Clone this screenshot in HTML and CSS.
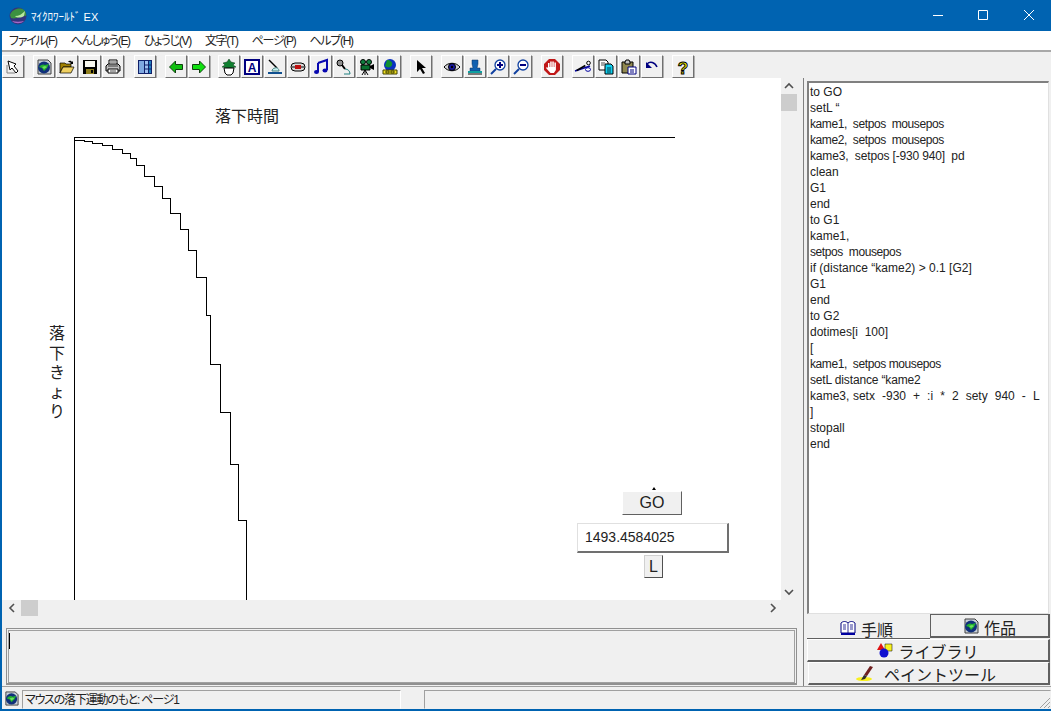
FILE: index.html
```html
<!DOCTYPE html>
<html lang="ja">
<head>
    <meta charset="UTF-8">
    <title>マイクロワールド EX</title>
    <link rel="stylesheet" href="styles.css">
</head>
<body>
    <svg class="defs" width="0" height="0">
        <symbol id="globe" viewBox="0 0 16 16">
            <path d="M2 1h10l3 3v11H2z" fill="#c8d0d8" stroke="#404040"/>
            <circle cx="8" cy="8.5" r="6" fill="#10307a"/>
            <path d="M3 8c2-3 5-3 6-2l4-1-2 4-3 3-2-3z" fill="#20b030"/>
            <path d="M6 8l3-1 2 1-3 2z" fill="#70e060"/>
        </symbol>
    </svg>

    <div class="window">
        <header class="titlebar">
            <svg class="app-logo" viewBox="0 0 18 18">
                <circle cx="9" cy="9" r="8.500" fill="#34347c"/>
                <path d="M1 8c2-6 10-8 14-5 2 2 2.500 4 2 6-4-1-10 4-15 2z" fill="#3c9040"/>
                <path d="M6 9c4 0 7-2 10-5l-1 5c-3 2-7 2-9 0z" fill="#b8e8a0"/>
                <path d="M3 14c3 3 9 3 12 0-4 1-8 1-12 0z" fill="#a868c8"/>
            </svg>
            <span class="app-title">ﾏｲｸﾛﾜｰﾙﾄﾞ EX</span>
            <div class="win-controls">
                <svg class="win-btn" viewBox="0 0 46 31"><path d="M20 15.500h10" stroke="#fff" fill="none"/></svg>
                <svg class="win-btn" viewBox="0 0 46 31"><path d="M19.500 10.500h9v9h-9z" stroke="#fff" fill="none"/></svg>
                <svg class="win-btn" viewBox="0 0 46 31"><path d="M19 10l10 10M29 10l-10 10" stroke="#fff" fill="none"/></svg>
            </div>
        </header>

        <nav class="menubar">
            <span>ファイル(F)</span>
            <span>へんしゅう(E)</span>
            <span>ひょうじ(V)</span>
            <span>文字(T)</span>
            <span>ページ(P)</span>
            <span>ヘルプ(H)</span>
        </nav>

        <div class="toolbar">
            <div class="tool-group">
                <button class="tool"><svg viewBox="0 0 16 16"><path d="M3 2l8 3-2 2 4 5-2 2-4-5-2 2z" fill="#fff" stroke="#000"/><path d="M2 6v8h8" fill="none" stroke="#808080"/></svg></button>
            </div>
            <div class="tool-group">
                <button class="tool"><svg viewBox="0 0 16 16"><use href="#globe"/></svg></button>
                <button class="tool"><svg viewBox="0 0 16 16"><path d="M1 4h5l1 1h5v3H4l-3 6z" fill="#a08000" stroke="#000" stroke-width=".7"/><path d="M4 8h11l-3 6H1z" fill="#f0d060" stroke="#000" stroke-width=".7"/><path d="M9 3c2-2 3-1 4 0l1-1v3h-3l1-1c-1-1-2-1-3-1z" fill="#000"/></svg></button>
                <button class="tool"><svg viewBox="0 0 16 16"><path d="M1 1h14v14H1z" fill="#000"/><path d="M3 2h10v6H3z" fill="#f8f8f0"/><path d="M4 10h8v5H4z" fill="#908020"/><path d="M9 11h2v3H9z" fill="#000"/></svg></button>
                <button class="tool"><svg viewBox="0 0 16 16"><path d="M4 1h8v5H4z" fill="#fff" stroke="#000"/><path d="M1 7l2-2h10l2 2v5H1z" fill="#c0c0c0" stroke="#000"/><path d="M3 10h10v4H3z" fill="#fff" stroke="#000"/><path d="M5 3h6M5 12h6M3 7h10" stroke="#000" stroke-width=".7"/></svg></button>
            </div>
            <div class="tool-group group-loose">
                <button class="tool"><svg viewBox="0 0 16 16"><path d="M1 1h14v14H1z" fill="#10206a"/><path d="M2 2h5v12H2z" fill="#80a8e0"/><path d="M8 2h3v12H8z" fill="#a0c0f0"/><path d="M12 2h2v12h-2z" fill="#2080c0"/><path d="M8 6h6M8 10h6" stroke="#10206a"/></svg></button>
            </div>
            <div class="tool-group">
                <button class="tool"><svg viewBox="0 0 16 16"><path d="M1.500 8l6-6v3.500h7v5h-7V14z" fill="#10c010" stroke="#104010"/></svg></button>
                <button class="tool"><svg viewBox="0 0 16 16"><path d="M14.500 8l-6-6v3.500h-7v5h7V14z" fill="#10e010" stroke="#104010"/></svg></button>
            </div>
            <div class="tool-group group-tight">
                <button class="tool"><svg viewBox="0 0 16 16"><path d="M8 0l2 3 4 1-2 2 3 2-5 1H6L1 8l3-2-2-2 4-1z" fill="#108030" stroke="#043010" stroke-width=".5"/><path d="M3 9h10l-1 5-2 2H6l-2-2z" fill="#fff" stroke="#000"/></svg></button>
                <button class="tool"><svg viewBox="0 0 16 16"><path d="M1 1h14v14H1z" fill="#fff" stroke="#000080" stroke-width="2"/><text x="8" y="12.500" class="glyph-a">A</text></svg></button>
                <button class="tool"><svg viewBox="0 0 16 16"><path d="M2 1l8 8" stroke="#000" stroke-width="1.500"/><path d="M8 9c2-1 4 1 4 3H5c0-1 1-3 3-3z" fill="#c8f0f0" stroke="#408080"/><path d="M1 13h14v2H1z" fill="#20a0a0"/><path d="M1 14h14" stroke="#000080"/></svg></button>
                <button class="tool"><svg viewBox="0 0 16 16"><rect x="1" y="4" width="14" height="8" rx="4" fill="#d8d8d8" stroke="#000"/><path d="M5 6h6v4H5z" fill="#c01010"/><path d="M2 8h3M11 8h3" stroke="#000"/></svg></button>
                <button class="tool"><svg viewBox="0 0 16 16"><path d="M5 4l9-3v10" fill="none" stroke="#0808b0" stroke-width="2"/><path d="M5 4v9" stroke="#0808b0" stroke-width="2"/><ellipse cx="3.500" cy="13" rx="2.500" ry="2" fill="#0808b0"/><ellipse cx="12" cy="11.500" rx="2.500" ry="2" fill="#0808b0"/></svg></button>
                <button class="tool"><svg viewBox="0 0 16 16"><circle cx="4" cy="4" r="3" fill="#909090" stroke="#000"/><path d="M6 6l3 4" stroke="#000" stroke-width="2"/><path d="M9 10c3 0 5 2 5 5H8" fill="none" stroke="#208080"/></svg></button>
                <button class="tool"><svg viewBox="0 0 16 16"><circle cx="4" cy="3" r="2.500" fill="#108040" stroke="#000"/><circle cx="10" cy="3" r="2.500" fill="#108040" stroke="#000"/><path d="M2 6h9v5H2z" fill="#087030" stroke="#000"/><path d="M11 7l4-2v6l-4-2z" fill="#000"/><path d="M6 11l-3 5M6 11v5M6 11l3 5" stroke="#000"/></svg></button>
                <button class="tool"><svg viewBox="0 0 16 16"><circle cx="8" cy="6" r="6" fill="#0830c0"/><path d="M5 1c3 0 6 2 5 5s-5 3-7 1z" fill="#109030"/><path d="M1 11h14v4H1z" fill="#f0e020" stroke="#404000"/><path d="M4 12h3v2H4zM9 12h3v2H9z" fill="none" stroke="#404000"/></svg></button>
            </div>
            <div class="tool-group">
                <button class="tool"><svg viewBox="0 0 16 16"><path d="M4 1l9 8H9l3 5-2 1-3-5-3 3z" fill="#000"/></svg></button>
            </div>
            <div class="tool-group">
                <button class="tool"><svg viewBox="0 0 16 16"><path d="M0 8c4-5 12-5 16 0-4 5-12 5-16 0z" fill="#d0d0d0" stroke="#000"/><circle cx="8" cy="8" r="3.500" fill="#1818a0" stroke="#000"/><circle cx="8" cy="8" r="1.200" fill="#000"/></svg></button>
                <button class="tool"><svg viewBox="0 0 16 16"><path d="M5 1h6v4l-1 4h3v3H3V9h3L5 5z" fill="#1060b0" stroke="#083060" stroke-width=".5"/><path d="M1 12h14v2H1z" fill="#10a0a0"/><path d="M1 15h14" stroke="#000"/></svg></button>
                <button class="tool"><svg viewBox="0 0 16 16"><path d="M6 10l-5 5" stroke="#1040a0" stroke-width="2"/><circle cx="10" cy="6" r="5" fill="#fff" stroke="#1040a0" stroke-width="1.300"/><path d="M7 6h6M10 3v6" stroke="#000080" stroke-width="2"/></svg></button>
                <button class="tool"><svg viewBox="0 0 16 16"><path d="M6 10l-5 5" stroke="#1040a0" stroke-width="2"/><circle cx="10" cy="6" r="5" fill="#fff" stroke="#1040a0" stroke-width="1.300"/><path d="M7 6h6" stroke="#000080" stroke-width="2"/></svg></button>
            </div>
            <div class="tool-group">
                <button class="tool"><svg viewBox="0 0 16 16"><path d="M5 0h6l5 5v6l-5 5H5l-5-5V5z" fill="#c01818"/><path d="M4 4h1.500v4H6.200V2.500h1.500V8h.6V2.500h1.500V8h.6V3.500h1.500V11l-2 3H6.500L2 9l1-1 1 1z" fill="#fff"/></svg></button>
            </div>
            <div class="tool-group">
                <button class="tool"><svg viewBox="0 0 16 16"><path d="M0 12l15-5" stroke="#0000a0" stroke-width="1.500"/><path d="M1 9l10 0" stroke="#000" stroke-width="1.500" transform="rotate(-30 6 9)"/><circle cx="13.500" cy="4" r="1.800" fill="#fff" stroke="#000"/><ellipse cx="13" cy="10.500" rx="2.500" ry="1.800" fill="#fff" stroke="#0000a0"/></svg></button>
                <button class="tool"><svg viewBox="0 0 16 16"><path d="M1 1h7l2 2v8H1z" fill="#fff" stroke="#000"/><path d="M7 5h6l2 2v8H7z" fill="#10d0f0" stroke="#000"/><path d="M3 4h4M3 6h3M9 9h4M9 11h4M9 13h4" stroke="#000" stroke-width=".7"/></svg></button>
                <button class="tool"><svg viewBox="0 0 16 16"><path d="M1 3h11v11H1z" fill="#908850" stroke="#000"/><path d="M4 3l1-2h3l1 2v2H4z" fill="#c0c0c0" stroke="#000"/><path d="M7 8h8v7H7z" fill="#fff" stroke="#000080"/><path d="M9 11h4M9 13h4" stroke="#000080"/></svg></button>
                <button class="tool"><svg viewBox="0 0 16 16"><path d="M3 5c3-3 8-2 10 3" fill="none" stroke="#000080" stroke-width="1.500"/><path d="M2 3v6h6z" fill="#000080"/></svg></button>
            </div>
            <div class="tool-group">
                <button class="tool"><svg viewBox="0 0 16 16"><text x="8" y="14.500" class="glyph-help">?</text></svg></button>
            </div>
        </div>

        <div class="workspace">
            <div class="stage-col">
                <div class="stage-row">
                    <div class="stage">
                        <svg class="graph" viewBox="2 78 779 522">
                            <path d="M74.500 600V137.500H675"/>
                            <path d="M74.500 140.500H84.500V141.500H92.500V143.500H102.500V145.500H112.500V149.500H122.500V153.500H130.500V158.500H136.500V165.500H144.500V176.500H154.500V186.500H162.500V198.500H170.500V213.500H180.500V229.500H188.500V250.500H196.500V277.500H206.500V315.500H210.500V364.500H220.500V412.500H230.500V464.500H238.500V520.500H246.500V600"/>
                        </svg>
                        <span class="graph-title">落下時間</span>
                        <span class="graph-ylabel">落<br>下<br>き<br>ょ<br>り</span>
                        <span class="turtle-dot"></span>
                        <button class="stage-btn go-btn">GO</button>
                        <div class="value-box">1493.4584025</div>
                        <button class="stage-btn l-btn">L</button>
                    </div>
                    <div class="vscroll">
                        <svg class="chevron" viewBox="0 0 16 16"><path d="M4 10l4-4 4 4" /></svg>
                        <div class="vthumb"></div>
                        <svg class="chevron chevron-end" viewBox="0 0 16 16"><path d="M4 6l4 4 4-4" /></svg>
                    </div>
                </div>
                <div class="hscroll">
                    <svg class="chevron" viewBox="0 0 16 16"><path d="M10 4l-4 4 4 4" /></svg>
                    <div class="hthumb"></div>
                    <svg class="chevron chevron-end" viewBox="0 0 16 16"><path d="M6 4l4 4-4 4" /></svg>
                </div>
                <div class="command-box"><span class="caret"></span></div>
            </div>

            <aside class="side-col">
                <pre class="code-box">to GO
setL “
<span class="code-tight">kame1,  setpos  mousepos</span>
<span class="code-tight">kame2,  setpos  mousepos</span>
<span class="code-snug">kame3,  setpos [-930 940]  pd</span>
clean
G1
end
to G1
kame1,
<span class="code-tight">setpos  mousepos</span>
if (distance “kame2) &gt; 0.1 [G2]
G1
end
to G2
dotimes[i  100]
[
<span class="code-tight">kame1,  setpos mousepos</span>
<span class="code-snug">setL distance “kame2</span>
<span class="code-wide">kame3, setx  -930  +  :i  *  2  sety  940  -  L</span>
]
stopall
end</pre>
                <div class="tab-row">
                    <div class="tab tab-active">
                        <svg class="tab-icon" viewBox="0 0 16 16"><path d="M1 3c2-2 5-2 7 0 2-2 5-2 7 0v10H1z" fill="#fff" stroke="#000080"/><path d="M8 3v10M3 5h3M3 7h3M10 5h3M10 7h3M3 9h3M10 9h3" stroke="#000080" stroke-width=".8"/><path d="M1 13h14v2H1z" fill="#0000a0"/></svg>
                        <span>手順</span>
                    </div>
                    <div class="tab tab-raised">
                        <svg class="tab-icon" viewBox="0 0 16 16"><use href="#globe"/></svg>
                        <span>作品</span>
                    </div>
                </div>
                <div class="tab tab-wide">
                    <svg class="tab-icon" viewBox="0 0 16 16"><path d="M4 1l4 7H0z" fill="#e01010"/><path d="M8 2h7v7H8z" fill="#f8f020" stroke="#000" stroke-width=".5"/><circle cx="7" cy="11" r="4.500" fill="#1010d0"/></svg>
                    <span>ライブラリ</span>
                </div>
                <div class="tab tab-wide tab-last">
                    <svg class="tab-icon tab-icon-brush" viewBox="0 0 24 16"><ellipse cx="9" cy="14" rx="8" ry="2" fill="#f8f020"/><path d="M15 1l3 1-6 9-3-1z" fill="#702020"/><path d="M9 10l3 1-2 3-4 1z" fill="#303030"/></svg>
                    <span>ペイントツール</span>
                </div>
            </aside>
        </div>

        <footer class="statusbar">
            <svg class="status-icon" viewBox="0 0 16 16"><use href="#globe"/></svg>
            <div class="status-text">マウスの落下運動のもと: ページ1</div>
            <div class="status-extra"></div>
            <svg class="grip" viewBox="0 0 14 14"><path d="M13 3L3 13M13 7l-6 6M13 11l-2 2" stroke="#a0a0a0" fill="none"/></svg>
        </footer>
    </div>
</body>
</html>
```

FILE: styles.css
```css
:root {
    --title-blue: #0063b1;
    --face: #f0f0f0;
    --shade: #808080;
    --jp-font: "Liberation Sans", "Noto Sans CJK JP", sans-serif;
}

* {
    margin: 0;
    padding: 0;
    box-sizing: border-box;
}

body {
    width: 1051px;
    height: 711px;
    overflow: hidden;
    background-color: var(--face);
    font-family: var(--jp-font);
    color: #000;
}

.defs {
    position: absolute;
}

.window {
    display: flex;
    flex-direction: column;
    height: 711px;
    border-left: 2px solid var(--title-blue);
    border-bottom: 2px solid var(--title-blue);
}

/* title bar */
.titlebar {
    display: flex;
    align-items: center;
    height: 31px;
    margin-left: -2px;
    padding-left: 9px;
    background-color: var(--title-blue);
    color: #fff;
}

.app-logo {
    width: 18px;
    height: 18px;
}

.app-title {
    margin-left: 4px;
    font-size: 11px;
}

.win-controls {
    display: flex;
    margin-left: auto;
}

.win-btn {
    width: 46px;
    height: 31px;
}

/* menu */
.menubar {
    display: flex;
    gap: 14px;
    align-items: center;
    height: 21px;
    padding: 0 0 2px 7px;
    background-color: #fff;
    border-bottom: 2px solid #a8a8a8;
    font-size: 12px;
    font-feature-settings: "palt";
    letter-spacing: -1.3px;
    color: #222;
}

/* toolbar */
.toolbar {
    display: flex;
    gap: 9px;
    height: 26px;
    padding: 3px 0 0 0;
    background-color: var(--face);
}

.tool-group {
    display: flex;
    gap: 1px;
}

.group-loose {
    margin-left: 1px;
}

.group-tight {
    margin-left: -1px;
}

.tool {
    display: flex;
    align-items: center;
    justify-content: center;
    width: 22px;
    height: 23px;
    background-color: var(--face);
    border: 1px solid;
    border-color: #fff #707070 #707070 #fff;
    box-shadow: 1px 1px 0 #b0b0b0;
}

.tool svg {
    width: 16px;
    height: 16px;
    overflow: visible;
}

.glyph-a {
    font: bold 12px "Liberation Sans", sans-serif;
    text-anchor: middle;
    fill: #000080;
}

.glyph-help {
    font: bold 17px "Liberation Sans", sans-serif;
    text-anchor: middle;
    fill: #f0f000;
    stroke: #000;
    stroke-width: 1px;
}

/* main area */
.workspace {
    display: flex;
    flex: 1;
    min-height: 0;
}

.stage-col {
    display: flex;
    flex-direction: column;
    width: 795px;
}

.stage-row {
    display: flex;
    height: 522px;
}

.stage {
    position: relative;
    width: 779px;
    background-color: #fff;
    overflow: hidden;
}

.graph {
    position: absolute;
    left: 0;
    top: 0;
    width: 779px;
    height: 522px;
}

.graph path {
    fill: none;
    stroke: #000;
    stroke-width: 1;
    shape-rendering: crispEdges;
}

.graph-title {
    position: absolute;
    left: 213px;
    top: 28px;
    font-size: 16px;
    line-height: 22px;
    color: #222;
}

.graph-ylabel {
    position: absolute;
    left: 47px;
    top: 246px;
    font-size: 16px;
    line-height: 19.5px;
    color: #222;
}

.turtle-dot {
    position: absolute;
    left: 650px;
    top: 409px;
    border-left: 2px solid transparent;
    border-right: 2px solid transparent;
    border-bottom: 3px solid #000;
}

.stage-btn {
    position: absolute;
    background-color: var(--face);
    border: 1px solid;
    font-family: var(--jp-font);
    color: #222;
}

.go-btn {
    left: 620px;
    top: 413px;
    width: 60px;
    height: 24px;
    border-color: #fff #606060 #606060 #fff;
    font-size: 16px;
}

.l-btn {
    left: 642px;
    top: 477px;
    width: 19px;
    height: 23px;
    border-color: #d0d0d0 #505050 #505050 #d0d0d0;
    font-size: 16px;
}

.value-box {
    position: absolute;
    left: 575px;
    top: 445px;
    width: 152px;
    height: 30px;
    padding-left: 7px;
    border: 1px solid;
    border-color: #e0e0e0 #707070 #707070 #e0e0e0;
    border-width: 1px 2px 2px 1px;
    background-color: #fff;
    font-size: 14px;
    line-height: 26px;
    color: #222;
}

/* scrollbars */
.vscroll {
    display: flex;
    flex-direction: column;
    width: 16px;
    background-color: var(--face);
}

.hscroll {
    display: flex;
    align-items: center;
    height: 16px;
    margin-right: 16px;
    padding-left: 2px;
    background-color: var(--face);
}

.chevron {
    flex-shrink: 0;
    width: 16px;
    height: 16px;
}

.chevron path {
    fill: none;
    stroke: #505050;
    stroke-width: 1.6;
}

.chevron-end {
    margin-top: auto;
}

.hscroll .chevron-end {
    margin: 0 0 0 auto;
}

.vthumb {
    height: 17px;
    background-color: #cdcdcd;
}

.hthumb {
    width: 17px;
    height: 16px;
    margin-left: 1px;
    background-color: #cdcdcd;
}

.command-box {
    height: 57px;
    margin: 12px 0 0 4px;
    padding: 4px 0 0 2px;
    border: 1px solid #909090;
    outline: 1px solid #a0a0a0;
    outline-offset: -3px;
    border-bottom-width: 2px;
    background-color: var(--face);
}

.caret {
    display: block;
    width: 1px;
    height: 16px;
    background-color: #000;
}

/* right panel */
.side-col {
    display: flex;
    flex-direction: column;
    width: 254px;
    padding: 3px 1px 0 10px;
    background: linear-gradient(var(--shade), var(--shade)) 6px 0 / 1px 100% no-repeat;
    font-size: 16px;
}

.code-box {
    height: 533px;
    margin-right: 1px;
    padding: 1px 0 0 1px;
    border: 1px solid;
    border-width: 2px 1px 1px 2px;
    border-color: #808080 #e0e0e0 #e0e0e0 #808080;
    background-color: #fff;
    font-family: var(--jp-font);
    font-size: 12px;
    line-height: 16px;
    color: #222;
    overflow: hidden;
}

.code-tight {
    letter-spacing: -0.4px;
}

.code-snug {
    letter-spacing: -0.15px;
}

.code-wide {
    word-spacing: 0.2px;
}

.tab-row {
    display: flex;
    height: 25px;
}

.tab {
    display: flex;
    align-items: center;
    justify-content: center;
    gap: 5px;
    background-color: var(--face);
    color: #222;
    border: 1px solid;
    border-color: #fff #606060 #606060 #fff;
}

.tab span {
    position: relative;
    top: 1px;
}

.tab-active {
    width: 123px;
    padding: 4px 4px 0 0;
    border-top: none;
    border-left: none;
    border-right: none;
}

.tab-raised {
    width: 120px;
    height: 24px;
    border-top-color: #606060;
    border-left-color: #606060;
    border-right-width: 2px;
    border-bottom-width: 2px;
}

.tab-wide {
    height: 23px;
    width: 243px;
    border-right-width: 2px;
    border-bottom-width: 2px;
}

.tab-last {
    width: 242px;
    margin-left: 1px;
    padding-right: 6px;
}

.tab-icon {
    width: 16px;
    height: 16px;
}

.tab-icon-brush {
    width: 24px;
}

/* status bar */
.statusbar {
    position: relative;
    display: flex;
    align-items: flex-end;
    height: 23px;
    padding-left: 2px;
    border-top: 1px solid #a0a0a0;
    font-size: 12px;
    color: #222;
}

.status-icon {
    align-self: center;
    width: 15px;
    height: 15px;
}

.status-text {
    width: 379px;
    height: 19px;
    margin-left: 3px;
    padding-left: 2px;
    border: 1px solid;
    border-color: #a0a0a0 #fff transparent #a0a0a0;
    font-feature-settings: "palt";
    letter-spacing: -1.2px;
    line-height: 18px;
}

.status-extra {
    flex: 1;
    height: 19px;
    margin-left: 23px;
    border: 1px solid;
    border-color: #a0a0a0 transparent transparent #a0a0a0;
}

.grip {
    position: absolute;
    right: 0;
    bottom: 0;
    width: 14px;
    height: 14px;
}
```
